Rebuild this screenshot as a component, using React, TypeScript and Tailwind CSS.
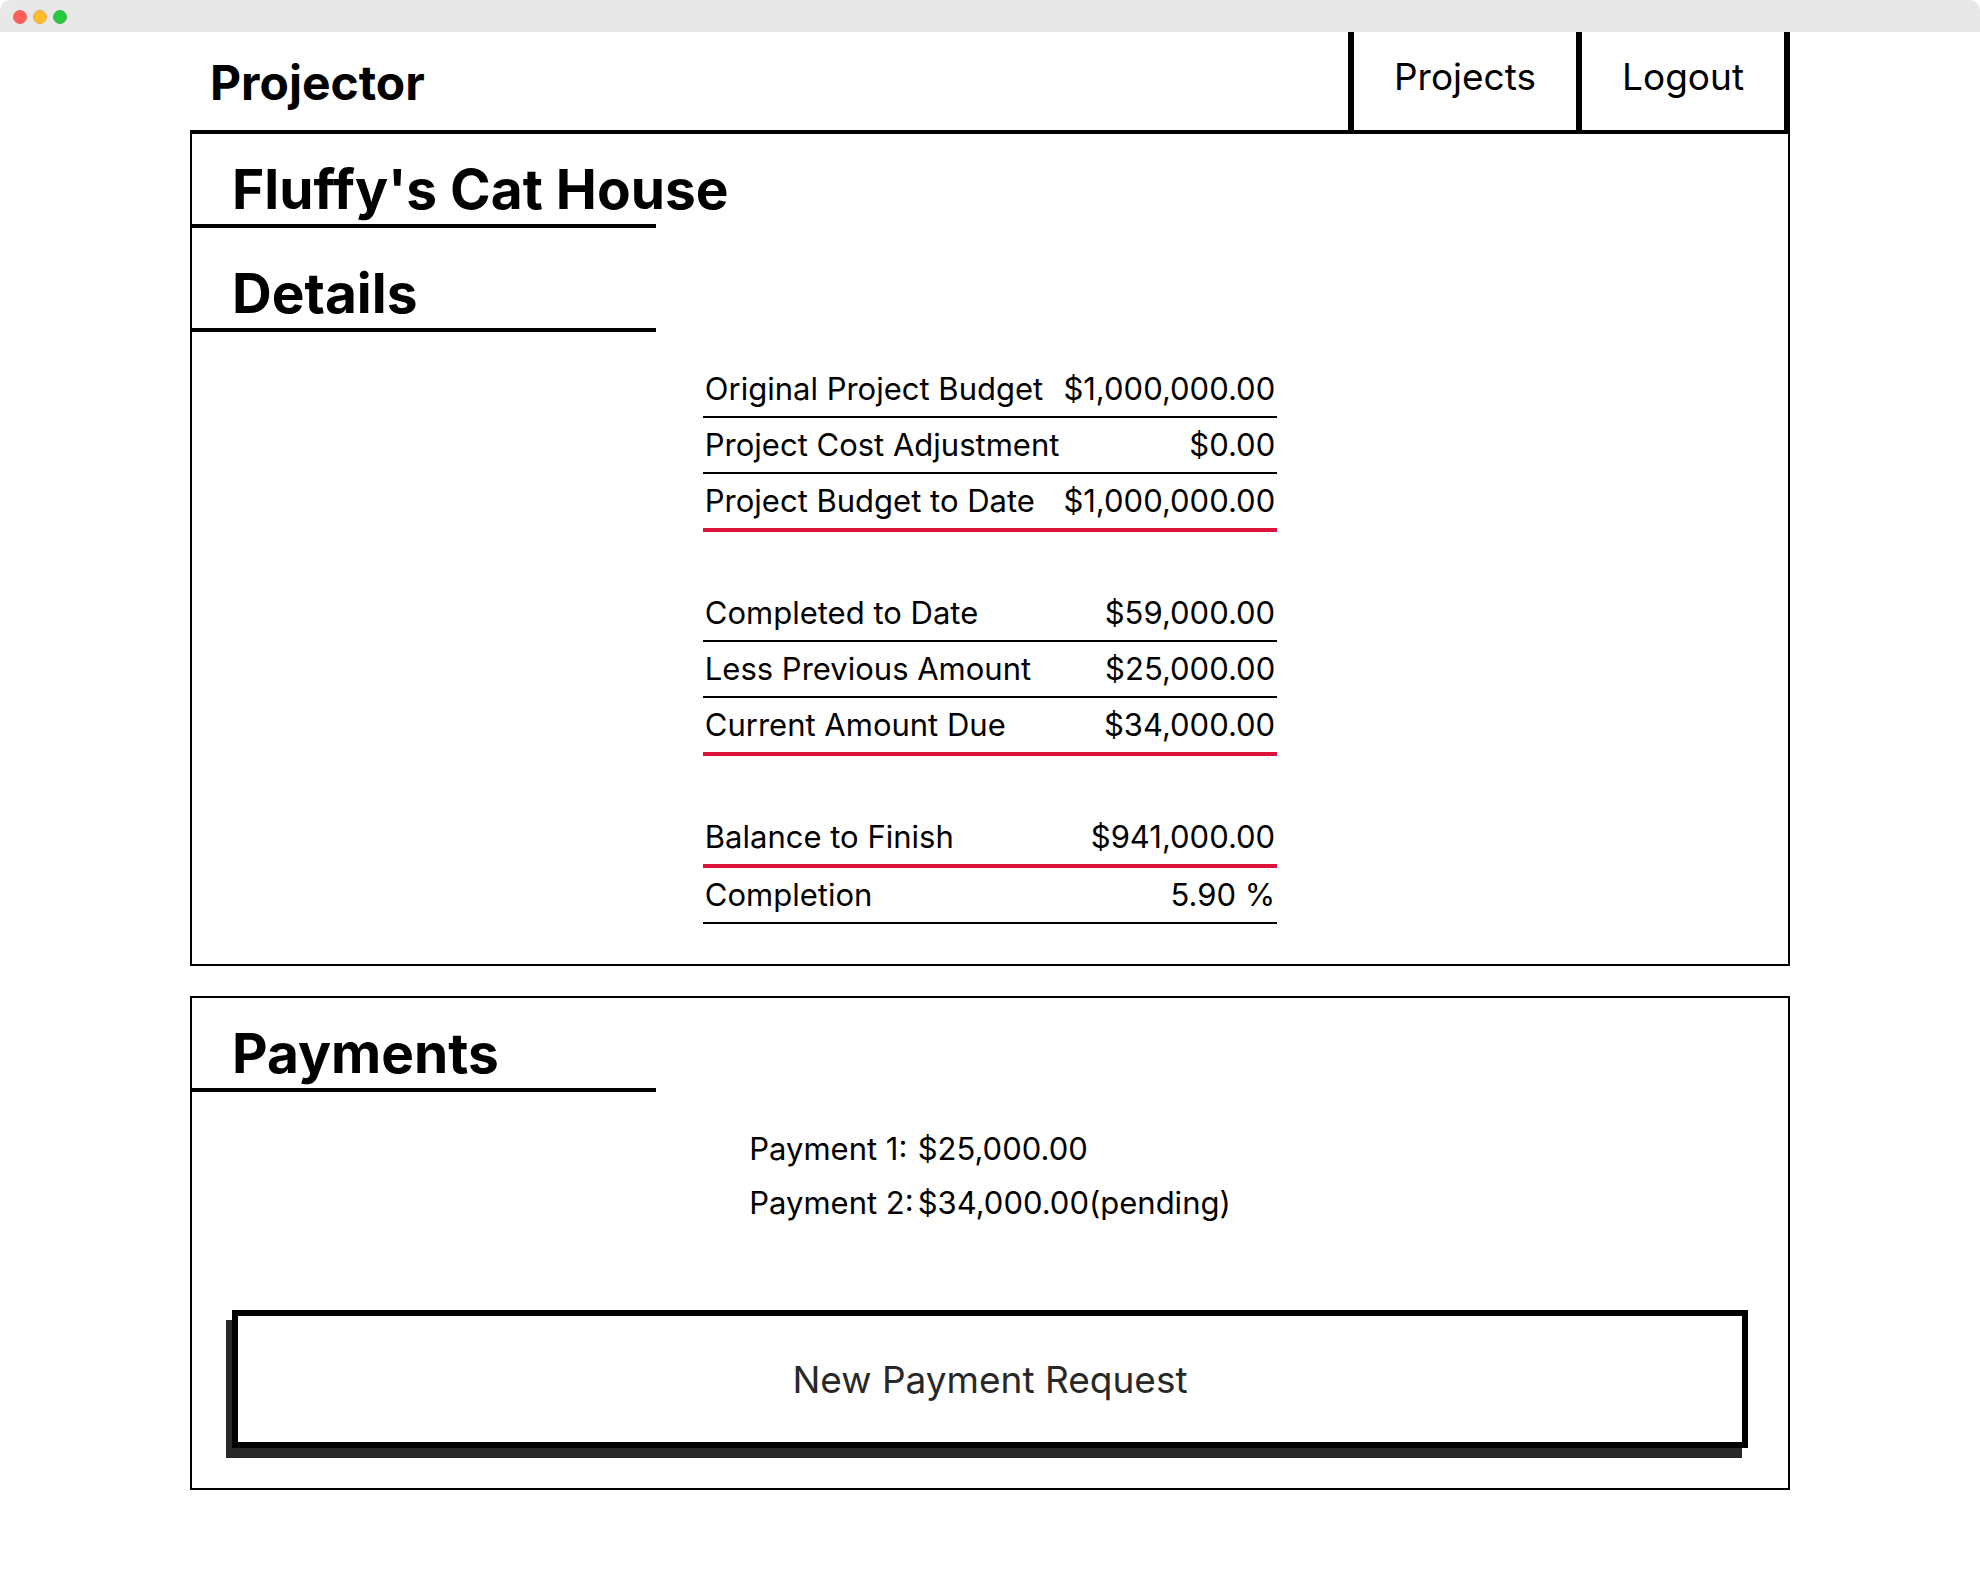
type Rule = 'thin' | 'thick';

interface DetailRow {
  label: string;
  value: string;
  rule: Rule;
}

const detailGroups: DetailRow[][] = [
  [
    { label: 'Original Project Budget', value: '$1,000,000.00', rule: 'thin' },
    { label: 'Project Cost Adjustment', value: '$0.00', rule: 'thin' },
    { label: 'Project Budget to Date', value: '$1,000,000.00', rule: 'thick' },
  ],
  [
    { label: 'Completed to Date', value: '$59,000.00', rule: 'thin' },
    { label: 'Less Previous Amount', value: '$25,000.00', rule: 'thin' },
    { label: 'Current Amount Due', value: '$34,000.00', rule: 'thick' },
  ],
  [
    { label: 'Balance to Finish', value: '$941,000.00', rule: 'thick' },
    { label: 'Completion', value: '5.90 %', rule: 'thin' },
  ],
];

const payments = [
  { label: 'Payment 1:', value: '$25,000.00' },
  { label: 'Payment 2:', value: '$34,000.00(pending)' },
];

const ruleClass: Record<Rule, string> = {
  thin: 'border-b-2 border-black',
  thick: 'border-b-4 border-[#dc143c]',
};

function TitleBar() {
  return (
    <div className="flex h-8 items-center gap-1.5 rounded-t-[10px] bg-[#e8e8e8] px-[13px] pt-0.5">
      <span className="size-3.5 rounded-full border border-[#e9655f] bg-[#ff5f57]" />
      <span className="size-3.5 rounded-full border border-[#e0ac4a] bg-[#ffbd2e]" />
      <span className="size-3.5 rounded-full border border-[#3db450] bg-[#28c941]" />
    </div>
  );
}

function SectionTitle({ children }: { children: string }) {
  return (
    <h2 className="w-[464px] max-w-full border-b-4 border-black pb-0.5 pl-10 text-[55px] leading-[66px] font-bold whitespace-nowrap">
      {children}
    </h2>
  );
}

function DetailsTable() {
  return (
    <table className="mx-auto mt-[30px] border-separate border-spacing-0 text-[31px] leading-[54px]">
      {detailGroups.map((group, index) => (
        <tbody key={group[0].label}>
          {index > 0 && (
            <tr aria-hidden="true">
              <td colSpan={2} className="h-[54px]" />
            </tr>
          )}
          {group.map((row) => (
            <tr key={row.label}>
              <th scope="row" className={`px-0.5 text-left font-normal ${ruleClass[row.rule]}`}>
                {row.label}
              </th>
              <td className={`px-0.5 text-right ${ruleClass[row.rule]}`}>{row.value}</td>
            </tr>
          ))}
        </tbody>
      ))}
    </table>
  );
}

function PaymentsTable() {
  return (
    <table className="mx-auto mt-[30px] border-separate border-spacing-0 text-[31px] leading-[54px]">
      <tbody>
        {payments.map((payment) => (
          <tr key={payment.label}>
            <th scope="row" className="px-0.5 text-left font-normal">
              {payment.label}
            </th>
            <td className="px-0.5">{payment.value}</td>
          </tr>
        ))}
      </tbody>
    </table>
  );
}

export default function App() {
  return (
    <div className="min-h-screen bg-white font-['Inter',sans-serif] text-black">
      <TitleBar />
      <div className="mx-auto max-w-[1600px]">
        <header className="flex justify-between border-b-2 border-black">
          <h1 className="px-5 pt-5 text-[48px] leading-[62px] font-bold">Projector</h1>
          <nav className="flex border-r-[6px] border-black text-[37px] leading-[50px]">
            <a href="#projects" className="border-l-[6px] border-black px-10 pt-5 pb-7">
              Projects
            </a>
            <a href="#logout" className="border-l-[6px] border-black px-10 pt-5 pb-7">
              Logout
            </a>
          </nav>
        </header>
        <main className="flex flex-col gap-[30px]">
          <section className="border-2 border-black pt-[22px] pb-10">
            <SectionTitle>Fluffy's Cat House</SectionTitle>
            <div className="mt-8">
              <SectionTitle>Details</SectionTitle>
            </div>
            <DetailsTable />
          </section>
          <section className="border-2 border-black pt-[22px] pb-10">
            <SectionTitle>Payments</SectionTitle>
            <PaymentsTable />
            <div className="mt-20 px-10">
              <button
                type="button"
                className="w-full border-[6px] border-black bg-white pt-[38px] pb-9 text-[37px] leading-[52px] text-[#282828] shadow-[-6px_10px_0_0_#282828]"
              >
                New Payment Request
              </button>
            </div>
          </section>
        </main>
      </div>
    </div>
  );
}
